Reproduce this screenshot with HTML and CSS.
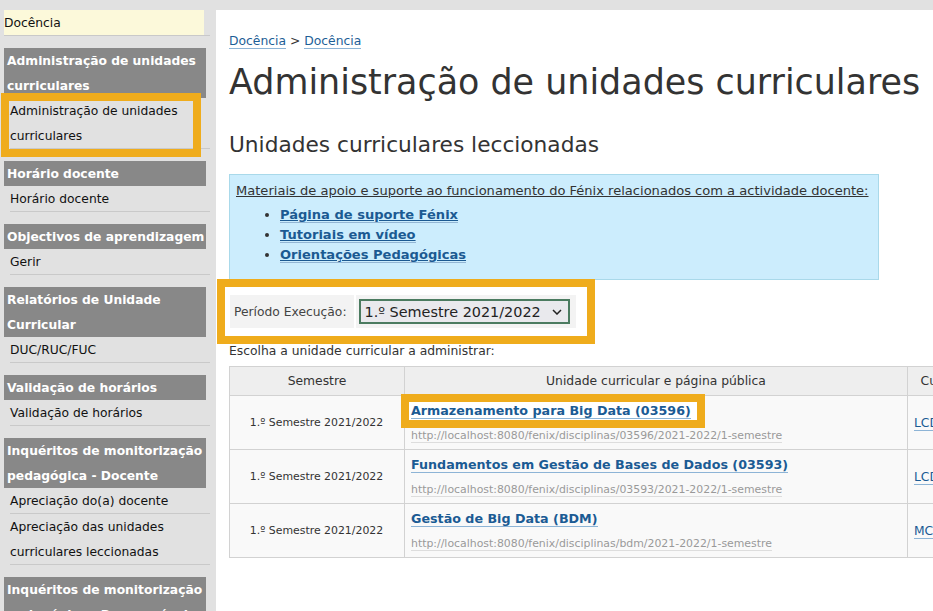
FILE: index.html
```html
<!DOCTYPE html>
<html lang="pt">
<head>
    <meta charset="UTF-8">
    <meta name="viewport" content="width=device-width, initial-scale=1.0">
    <title>Fénix | Administração de unidades curriculares</title>
    <link rel="stylesheet" href="styles.css">
</head>
<body>
<div class="pagina">
    <!-- Menu lateral -->
    <aside class="menu">
        <div class="menu-topo"><div class="topo-fundo"><a href="#">Docência</a></div></div>

        <div class="grupo">
            <h3><span>Administração de unidades curriculares</span></h3>
            <ul>
                <li class="marcado-menu"><a href="#">Administração de unidades curriculares</a></li>
            </ul>
        </div>

        <div class="grupo">
            <h3><span>Horário docente</span></h3>
            <ul>
                <li><a href="#">Horário docente</a></li>
            </ul>
        </div>

        <div class="grupo">
            <h3><span>Objectivos de aprendizagem</span></h3>
            <ul>
                <li><a href="#">Gerir</a></li>
            </ul>
        </div>

        <div class="grupo">
            <h3><span>Relatórios de Unidade Curricular</span></h3>
            <ul>
                <li><a href="#">DUC/RUC/FUC</a></li>
            </ul>
        </div>

        <div class="grupo">
            <h3><span>Validação de horários</span></h3>
            <ul>
                <li><a href="#">Validação de horários</a></li>
            </ul>
        </div>

        <div class="grupo">
            <h3><span>Inquéritos de monitorização pedagógica - Docente</span></h3>
            <ul>
                <li><a href="#">Apreciação do(a) docente</a></li>
                <li><a href="#">Apreciação das unidades curriculares leccionadas</a></li>
            </ul>
        </div>

        <div class="grupo">
            <h3><span>Inquéritos de monitorização pedagógica - Responsável</span></h3>
            <ul>
                <li><a href="#">Relatórios</a></li>
            </ul>
        </div>
    </aside>

    <!-- Conteudo principal -->
    <main class="conteudo">
        <div class="migalhas">
            <a href="#">Docência</a> &gt; <a href="#">Docência</a>
        </div>

        <h1>Administração de unidades curriculares</h1>
        <h2>Unidades curriculares leccionadas</h2>

        <div class="apoio">
            <p>Materiais de apoio e suporte ao funcionamento do Fénix relacionados com a actividade docente:</p>
            <ul>
                <li><a href="#">Página de suporte Fénix</a></li>
                <li><a href="#">Tutoriais em vídeo</a></li>
                <li><a href="#">Orientações Pedagógicas</a></li>
            </ul>
        </div>

        <form class="periodo" action="" method="GET">
            <label for="periodo">Período Execução:</label>
            <div class="campo">
                <select name="periodo" id="periodo">
                    <option>1.º Semestre 2021/2022</option>
                    <option>2.º Semestre 2020/2021</option>
                </select>
                <svg class="seta" width="10" height="6" viewBox="0 0 10 6"><polyline points="1,1 5,5 9,1" fill="none" stroke="#222" stroke-width="1.5"/></svg>
            </div>
        </form>

        <p class="escolha">Escolha a unidade curricular a administrar:</p>

        <table class="tabela">
            <colgroup>
                <col class="col-sem">
                <col class="col-uc">
                <col class="col-curso">
            </colgroup>
            <thead>
                <tr>
                    <th>Semestre</th>
                    <th>Unidade curricular e página pública</th>
                    <th>Cursos</th>
                </tr>
            </thead>
            <tbody>
                <tr>
                    <td class="sem">1.º Semestre 2021/2022</td>
                    <td>
                        <div class="uc-nome"><span class="marcado-tabela"><a href="#">Armazenamento para Big Data (03596)</a></span></div>
                        <div class="uc-url"><span>http://localhost:8080/fenix/disciplinas/03596/2021-2022/1-semestre</span></div>
                    </td>
                    <td class="curso"><a href="#">LCD</a></td>
                </tr>
                <tr>
                    <td class="sem">1.º Semestre 2021/2022</td>
                    <td>
                        <div class="uc-nome"><a href="#">Fundamentos em Gestão de Bases de Dados (03593)</a></div>
                        <div class="uc-url"><span>http://localhost:8080/fenix/disciplinas/03593/2021-2022/1-semestre</span></div>
                    </td>
                    <td class="curso"><a href="#">LCD</a></td>
                </tr>
                <tr>
                    <td class="sem">1.º Semestre 2021/2022</td>
                    <td>
                        <div class="uc-nome"><a href="#">Gestão de Big Data (BDM)</a></div>
                        <div class="uc-url"><span>http://localhost:8080/fenix/disciplinas/bdm/2021-2022/1-semestre</span></div>
                    </td>
                    <td class="curso"><a href="#">MCD</a></td>
                </tr>
            </tbody>
        </table>
    </main>
</div>
</body>
</html>
```

FILE: styles.css
```css
*, *::before, *::after {
    margin: 0;
    padding: 0;
    box-sizing: border-box;
}

html, body {
    height: 100%;
    overflow: hidden;
}

body {
    font-family: "DejaVu Sans", Verdana, sans-serif;
    font-size: 12.35px;
    color: #333;
    background: #e1e1e1;
}

.pagina {
    display: flex;
    padding-top: 10px;
    min-height: 100vh;
}

/* Menu lateral */
.menu {
    width: 216px;
    flex: none;
    padding-left: 4px;
    font-size: 12.3px;
    line-height: 25px;
    color: #111;
}

/* texto do menu um pouco mais abaixo, sem mexer na altura das linhas */
.menu a, .menu h3 span {
    line-height: 20px;
    vertical-align: -1px;
}

.menu-topo {
    width: 206px;
    border-bottom: 1px solid #c9c9c9;
}

.topo-fundo {
    width: 200px;
    background: #fcf9da;
}

.grupo {
    margin-top: 12px;
}

.grupo h3 {
    width: 202px;
    padding-left: 3px;
    background: #888;
    color: #fff;
    font-size: inherit;
    font-weight: bold;
}

.grupo li {
    list-style: none;
    margin-left: 6px;
    width: 200px;
    border-bottom: 1px solid #c9c9c9;
}

.menu a {
    color: #111;
    text-decoration: none;
}

/* destaque laranja */
.marcado-menu {
    position: relative;
}

.marcado-menu::after {
    content: "";
    position: absolute;
    left: -9px;
    top: -5px;
    width: 200px;
    height: 64px;
    border: 8px solid #efac1c;
}

/* Conteudo */
.conteudo {
    flex: 1;
    min-width: 0;
    background: #fff;
    padding: 23px 0 0 13px;
    overflow: hidden;
}

.migalhas {
    line-height: 16px;
}

.migalhas a {
    color: #1d5e96;
    text-decoration: none;
    border-bottom: 1px solid #8db4d6;
}

h1 {
    margin-top: 12px;
    font-size: 34.9px;
    font-weight: normal;
    line-height: 42px;
    white-space: nowrap;
    color: #333;
}

h2 {
    margin-top: 29px;
    font-size: 21.7px;
    font-weight: normal;
    line-height: 26px;
    color: #333;
}

.apoio {
    margin-top: 16px;
    width: 650px;
    padding: 6px 6px 14px;
    border: 1px solid #a9d9ea;
    background: #ccedfd;
    font-size: 13.05px;
    line-height: 20px;
}

.apoio p {
    text-decoration: underline;
}

.apoio ul {
    margin-top: 4px;
    padding-left: 44px;
}

.apoio ul a {
    color: #1b5a92;
    font-weight: bold;
    text-decoration: underline;
    border-bottom: 1px solid #93b6d4;
}

/* Periodo de execucao */
.periodo {
    position: relative;
    display: flex;
    gap: 2px;
    width: fit-content;
    margin: 15px 0 0 1px;
}

.periodo::after {
    content: "";
    position: absolute;
    left: -13px;
    top: -16px;
    width: 378px;
    height: 65px;
    border: 8px solid #efac1c;
}

.periodo label {
    display: flex;
    align-items: center;
    padding: 0 7px 0 4px;
    background: #f3f3f3;
    color: #444;
    font-size: 12.3px;
}

.campo {
    position: relative;
    padding: 4px 6px 4px 3px;
    background: #f3f3f3;
}

.campo select {
    display: block;
    width: 211px;
    height: 25px;
    padding-left: 4px;
    border: 2px solid #4b7b60;
    border-radius: 0;
    background: #e9e9ed;
    color: #222;
    font-family: "DejaVu Sans", Verdana, sans-serif;
    font-size: 14.4px;
    appearance: none;
    -webkit-appearance: none;
    outline: none;
}

.seta {
    position: absolute;
    right: 14px;
    top: 14px;
    pointer-events: none;
}

.escolha {
    margin-top: 15px;
    line-height: 16px;
}

/* Tabela */
.tabela {
    margin-top: 7px;
    border-collapse: collapse;
    table-layout: fixed;
    width: 746px;
}

.col-sem { width: 175px; }
.col-uc { width: 503px; }
.col-curso { width: 68px; }

.tabela th {
    height: 29px;
    background: #eee;
    border: 1px solid #d2d2d2;
    font-weight: normal;
    color: #333;
    text-align: center;
    white-space: nowrap;
}

.tabela td {
    padding: 6px 7px 6px 6px;
    background: #f9f9f9;
    border: 1px solid #d2d2d2;
    vertical-align: top;
    white-space: nowrap;
}

.tabela td.sem {
    text-align: center;
    vertical-align: middle;
    font-size: 10.9px;
}

.tabela td.curso {
    vertical-align: middle;
    font-size: 12.3px;
}

.tabela a {
    color: #1b5b94;
    text-decoration: none;
    border-bottom: 1px solid #8db4d6;
}

.uc-nome {
    line-height: 18px;
}

.uc-nome a {
    font-weight: bold;
    font-size: 12.7px;
}

.marcado-tabela {
    padding: 2px 6px 2px 2px;
    margin-left: -2px;
    background: #fff;
    outline: 8px solid #efac1c;
}

.uc-url {
    margin-top: 9px;
    line-height: 14px;
    font-size: 10.9px;
}

.uc-url span {
    color: #999;
    border-bottom: 1px solid #ddd;
}
```
